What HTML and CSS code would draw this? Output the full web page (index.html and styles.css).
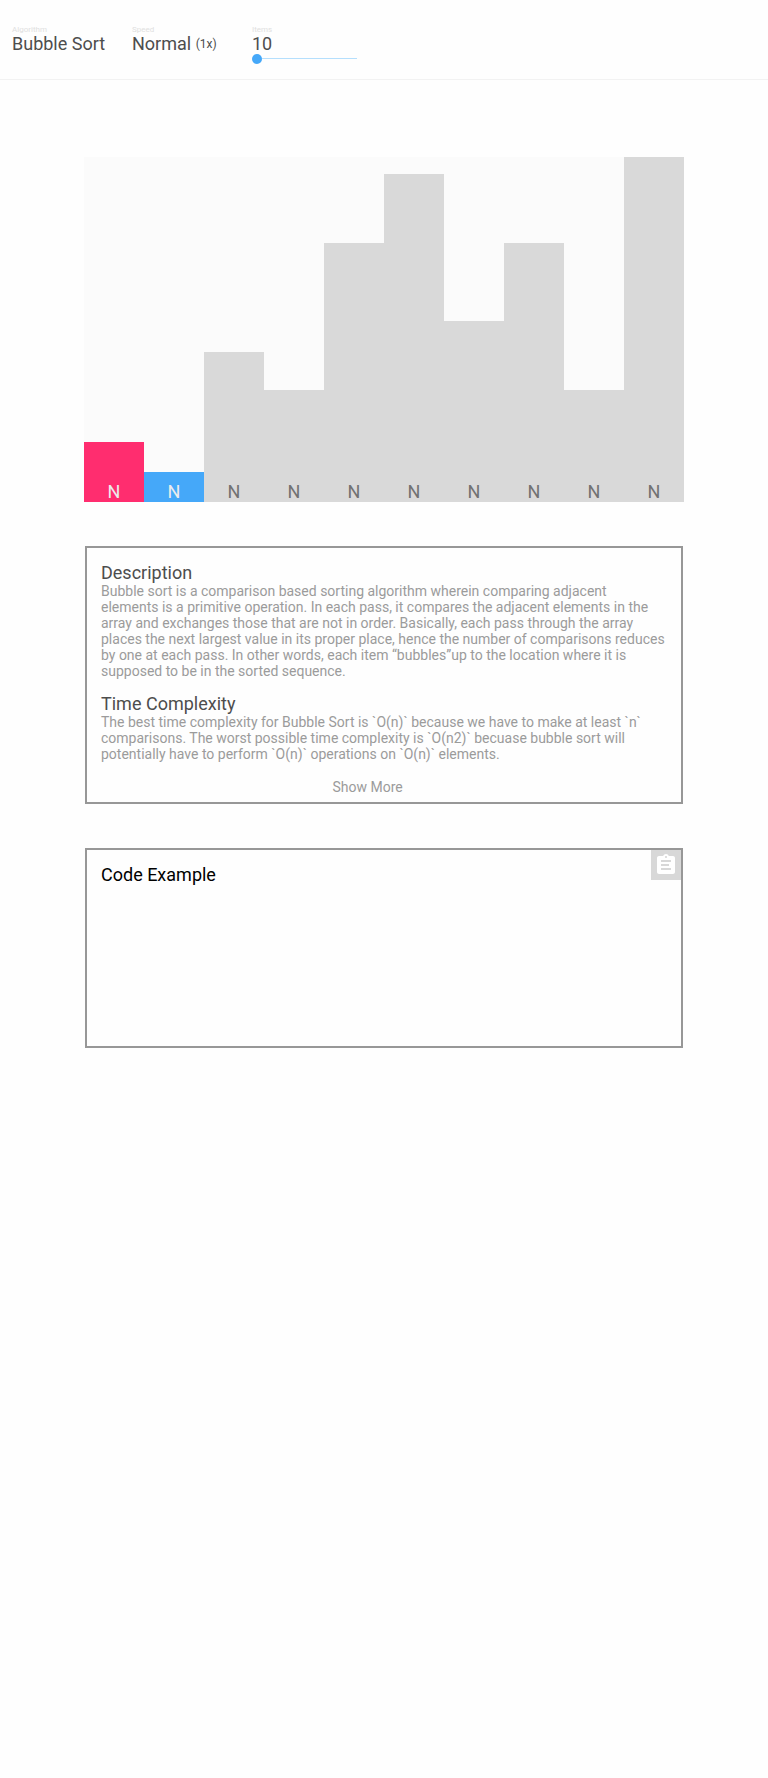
FILE: index.html
```html
<!DOCTYPE html>
<html lang="en">
<head>
<meta charset="utf-8">
<title>Sorting Visualizer</title>
<link rel="stylesheet" href="styles.css">
</head>
<body>
<header class="toolbar">
  <div class="control"><span class="label">Algorithm</span><span class="value">Bubble Sort</span></div>
  <div class="control"><span class="label">Speed</span><span class="value">Normal <small class="rate">(1x)</small></span></div>
  <div class="control"><span class="label">Items</span><span class="value">10</span>
    <div class="slider"><span class="thumb"></span><span class="track"></span></div>
  </div>
</header>
<main class="content">
  <section class="chart">
    <div class="bar current" style="height:60px">N</div>
    <div class="bar compare" style="height:30px">N</div>
    <div class="bar" style="height:150px">N</div>
    <div class="bar" style="height:112px">N</div>
    <div class="bar" style="height:259px">N</div>
    <div class="bar" style="height:328px">N</div>
    <div class="bar" style="height:181px">N</div>
    <div class="bar" style="height:259px">N</div>
    <div class="bar" style="height:112px">N</div>
    <div class="bar" style="height:345px">N</div>
  </section>
  <section class="panel info">
    <h2 class="title">Description</h2>
    <p class="text">Bubble sort is a comparison based sorting algorithm wherein comparing adjacent<br>elements is a primitive operation. In each pass, it compares the adjacent elements in the<br>array and exchanges those that are not in order. Basically, each pass through the array<br>places the next largest value in its proper place, hence the number of comparisons reduces<br>by one at each pass. In other words, each item “bubbles”up to the location where it is<br>supposed to be in the sorted sequence.</p>
    <h2 class="title">Time Complexity</h2>
    <p class="text">The best time complexity for Bubble Sort is `O(n)` because we have to make at least `n`<br>comparisons. The worst possible time complexity is `O(n2)` becuase bubble sort will<br>potentially have to perform `O(n)` operations on `O(n)` elements.</p>
    <a class="more">Show More</a>
  </section>
  <section class="panel code">
    <h2 class="title">Code Example</h2>
    <button class="copy" aria-label="Copy"><svg width="24" height="24" viewBox="0 0 24 24"><path fill="#fff" fill-rule="evenodd" d="M19 3h-4.180C14.4 1.84 13.3 1 12 1s-2.400.84-2.820 2H5c-1.100 0-2 .9-2 2v14c0 1.100.9 2 2 2h14c1.100 0 2-.9 2-2V5c0-1.100-.9-2-2-2zm-7 0c.55 0 1 .45 1 1s-.45 1-1 1-1-.45-1-1 .45-1 1-1zM7 7h10v2H7zM7 11h8v2H7zM7 15h10v2H7z"/></svg></button>
  </section>
</main>
</body>
</html>
```
FILE: styles.css
```css
* { box-sizing: border-box; }
body { margin: 0; min-height: 1778px; background: #fefefe; font-family: Roboto, sans-serif; color: #4d4d4d; }
.toolbar { display: flex; height: 80px; padding: 26px 12px 0; border-bottom: 1px solid #f2f2f2; }
.control { display: flex; flex-direction: column; width: 120px; }
.label { font-size: 8px; line-height: 8px; color: #e0e0e0; }
.value { font-size: 18px; line-height: 20px; white-space: nowrap; }
.rate { font-size: 12px; vertical-align: 2px; line-height: 1; }
.slider { display: flex; align-items: center; width: 105px; height: 10px; }
.thumb { width: 10px; height: 10px; border-radius: 50%; background: #45a8f9; }
.track { flex: 1; height: 1px; margin-bottom: 1px; background: #b5dffd; }
.content { display: flex; flex-direction: column; align-items: center; padding-top: 77px; }
.chart { display: flex; align-items: flex-end; width: 600px; height: 345px; background: #fbfbfb; }
.bar { display: flex; align-items: flex-end; justify-content: center; width: 60px; background: #d9d9d9; color: #717171; font-size: 18px; line-height: 21px; }
.current { background: #ff2d6f; color: #ececec; }
.compare { background: #45a8f9; color: #ececec; }
.panel { display: flex; flex-direction: column; width: 598px; margin-top: 44px; border: 2px solid #979797; padding: 14px; }
.title { margin: 0; font-size: 18px; line-height: 21px; font-weight: 400; }
.text { margin: 0 0 14px; font-size: 14px; line-height: 16px; color: #9b9b9b; white-space: nowrap; }
.info { height: 258px; }
.more { margin-left: 231.5px; margin-top: 3px; font-size: 14px; line-height: 16px; color: #9b9b9b; }
.code { position: relative; height: 200px; color: #000; }
.copy { position: absolute; top: 0; right: 0; display: flex; align-items: center; justify-content: center; width: 30px; height: 30px; border: 0; padding: 0; background: #d8d8d8; }
```
